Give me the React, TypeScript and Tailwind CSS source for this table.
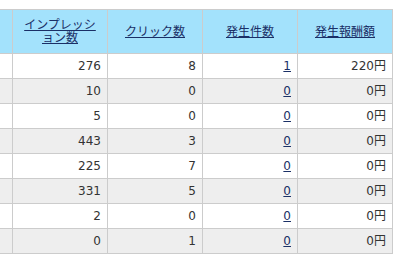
import React from "react";

const rows = [
  ["276", "8", "1", "220円"],
  ["10", "0", "0", "0円"],
  ["5", "0", "0", "0円"],
  ["443", "3", "0", "0円"],
  ["225", "7", "0", "0円"],
  ["331", "5", "0", "0円"],
  ["2", "0", "0", "0円"],
  ["0", "1", "0", "0円"],
];

const font = { fontFamily: '"DejaVu Sans", "Noto Sans CJK JP", sans-serif' };

export default function App() {
  return (
    <div className="w-[404px] h-[266px] bg-white overflow-hidden" style={font}>
      <div className="mt-[9px] w-[393px] border-t border-[#cccccc] text-[12px]">
        <div className="flex h-[44px] bg-[#a3e2fc] border-b border-[#cccccc] text-[#1a2f66]">
          <div className="w-[13px] border-r border-[#cccccc]" />
          <div className="w-[95px] border-r border-[#cccccc] flex items-center justify-center text-center leading-[13px]">
            <span className="underline">インプレッシ<br />ョン数</span>
          </div>
          <div className="w-[95px] border-r border-[#cccccc] flex items-center justify-center">
            <span className="underline">クリック数</span>
          </div>
          <div className="w-[95px] border-r border-[#cccccc] flex items-center justify-center">
            <span className="underline">発生件数</span>
          </div>
          <div className="w-[95px] border-r border-[#cccccc] flex items-center justify-center">
            <span className="underline">発生報酬額</span>
          </div>
        </div>
        {rows.map((r, i) => (
          <div
            key={i}
            className={`flex h-[25px] border-b border-[#cccccc] text-[#333333] ${i % 2 === 1 ? "bg-[#eeeeee]" : "bg-white"}`}
          >
            <div className="w-[13px] border-r border-[#cccccc]" />
            <div className="w-[95px] border-r border-[#cccccc] flex items-center justify-end pr-[6px]">{r[0]}</div>
            <div className="w-[95px] border-r border-[#cccccc] flex items-center justify-end pr-[6px]">{r[1]}</div>
            <div className="w-[95px] border-r border-[#cccccc] flex items-center justify-end pr-[6px]">
              <span className="underline text-[#1a2f66]">{r[2]}</span>
            </div>
            <div className="w-[95px] border-r border-[#cccccc] flex items-center justify-end pr-[6px]">{r[3]}</div>
          </div>
        ))}
      </div>
    </div>
  );
}
